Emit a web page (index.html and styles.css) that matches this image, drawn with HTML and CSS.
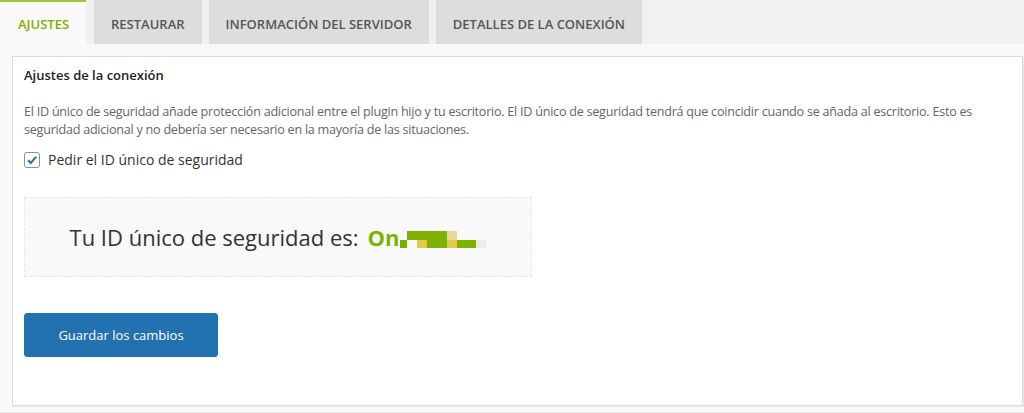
FILE: index.html
```html
<!DOCTYPE html>
<html lang="es">
<head>
<meta charset="utf-8">
<title>Ajustes</title>
<link rel="stylesheet" href="styles.css">
</head>
<body>
<div class="tabs">
  <div class="tab active">AJUSTES</div>
  <div class="tab">RESTAURAR</div>
  <div class="tab">INFORMACIÓN DEL SERVIDOR</div>
  <div class="tab">DETALLES DE LA CONEXIÓN</div>
</div>
<div class="panel">
  <div class="card">
    <h3 class="card-title">Ajustes de la conexión</h3>
    <p class="desc">El ID único de seguridad añade protección adicional entre el plugin hijo y tu escritorio. El ID único de seguridad tendrá que coincidir cuando se añada al escritorio. Esto es seguridad adicional y no debería ser necesario en la mayoría de las situaciones.</p>
    <label class="check">
      <span class="box"><svg width="12" height="12" viewBox="0 0 12 12"><path d="M2 6.2 L4.8 9 L10.2 2.6" fill="none" stroke="#2271b1" stroke-width="2"/></svg></span>
      <span>Pedir el ID único de seguridad</span>
    </label>
    <div class="id-box">
      <span class="id-text">Tu ID único de seguridad es:</span>
      <span class="id-val">On</span>
      <svg class="pix" width="86" height="18" viewBox="0 0 86 18">
        <rect x="0" y="9" width="7" height="8" fill="#7fad00"/>
        <rect x="7" y="0" width="40" height="9" fill="#7fb100"/>
        <rect x="17" y="9" width="10" height="8" fill="#e3c84f"/>
        <rect x="27" y="0" width="20" height="17" fill="#7fb100"/>
        <rect x="47" y="0" width="10" height="9" fill="#ead897"/>
        <rect x="47" y="9" width="10" height="8" fill="#e3c84f"/>
        <rect x="57" y="9" width="19" height="8" fill="#7fb100"/>
        <rect x="76" y="9" width="10" height="8" fill="#ececec"/>
      </svg>
    </div>
    <button class="save">Guardar los cambios</button>
  </div>
</div>
</body>
</html>
```
FILE: styles.css
```css
html, body {
  margin: 0;
  padding: 0;
  background: #f1f1f1;
  font-family: "Open Sans", "Noto Sans", sans-serif;
  color: #333;
}
.tabs {
  display: flex;
  gap: 7px;
  height: 44px;
}
.tab {
  display: flex;
  align-items: center;
  justify-content: center;
  padding: 3px 17px 0;
  background: #dddddd;
  color: #555;
  font-size: 13px;
  font-weight: 600;
  height: 44px;
  box-sizing: border-box;
}
.tab.active {
  background: #f9f9f9;
  color: #7fb100;
  border-top: 2px solid #9cc73a;
  padding: 1px 17px 0 18px;
  margin-right: 1px;
}
.panel {
  background: #f9f9f9;
  padding: 12px 1px 6px 12px;
  border-bottom: 1px solid #e6e6e6;
}
.card {
  background: #fff;
  border: 1px solid #dcdcdc;
  box-shadow: 1px 1px 1px rgba(0,0,0,0.06);
  padding: 7px 11px 46px;
  height: 350px;
  box-sizing: border-box;
}
.card-title {
  margin: 0;
  font-size: 13px;
  font-weight: 600;
  color: #222;
  line-height: 22px;
}
.desc {
  margin: 17px 0 0;
  font-size: 12.6px;
  letter-spacing: -0.25px;
  line-height: 18px;
  color: #666;
}
.check {
  display: flex;
  align-items: center;
  gap: 8px;
  margin-top: 11px;
  font-size: 14px;
  color: #333;
  line-height: 20px;
}
.box {
  width: 14px;
  height: 14px;
  border: 1px solid #8c8f94;
  border-radius: 3px;
  display: flex;
  align-items: center;
  justify-content: center;
  background: #fff;
}
.id-box {
  margin-top: 27px;
  width: 508px;
  height: 80px;
  box-sizing: border-box;
  background: #f9f9f9;
  border: 1px dashed #e6e6e6;
  display: flex;
  align-items: center;
  justify-content: center;
  font-size: 22px;
  color: #333;
}
.id-text { margin-right: 9px; }
.id-val {
  color: #7fb100;
  font-weight: 700;
}
.pix {
  margin-left: 1px;
  margin-top: 6px;
}
.save {
  display: block;
  margin-top: 36px;
  width: 194px;
  height: 44px;
  background: #2271b1;
  color: #fff;
  border: 1px solid #2271b1;
  border-radius: 3px;
  font-family: inherit;
  font-size: 13px;
}
```
